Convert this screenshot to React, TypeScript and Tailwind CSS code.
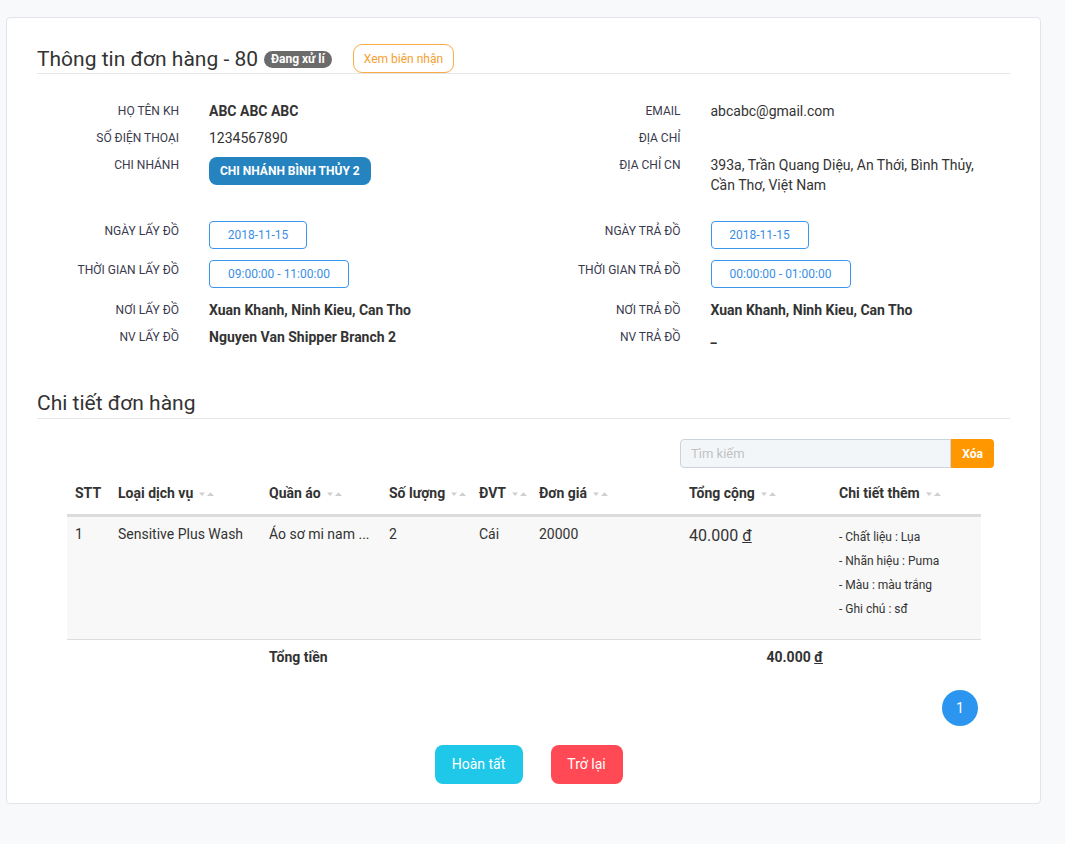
import React from "react";

const font = { fontFamily: "Roboto, 'Noto Sans', sans-serif" };

function SortIcon(): React.ReactElement {
  return (
    <svg width="17" height="6" viewBox="0 0 17 6" className="ml-[5px] inline-block align-middle">
      <path d="M1 1.5h6l-3 3.5z" fill="#cfcfcf" />
      <path d="M9 5h7l-3.5-3.8z" fill="#cfcfcf" />
    </svg>
  );
}

interface RowProps {
  label: string;
  labelW: string;
  children: React.ReactNode;
  className?: string;
}

function Row({ label, labelW, children, className = "" }: RowProps): React.ReactElement {
  return (
    <div className={`flex items-start ${className}`}>
      <div className={`${labelW} shrink-0 pr-[30px] text-right text-[12px] uppercase leading-[20px] text-[#3a3a4e]`}>
        {label}
      </div>
      <div className="text-[14px] leading-[20px] text-[#333]">{children}</div>
    </div>
  );
}

function DateBox({ w, children }: { w: string; children: React.ReactNode }): React.ReactElement {
  return (
    <div
      className={`${w} flex h-[28px] items-center justify-center rounded-[4px] border border-[#3b96ee] text-[12px] text-[#3b8fe6]`}
    >
      {children}
    </div>
  );
}

const headers = [
  { t: "STT", w: "w-[43px]", sort: false },
  { t: "Loại dịch vụ", w: "w-[151px]", sort: true },
  { t: "Quần áo", w: "w-[120px]", sort: true },
  { t: "Số lượng", w: "w-[90px]", sort: true },
  { t: "ĐVT", w: "w-[60px]", sort: true },
  { t: "Đơn giá", w: "w-[150px]", sort: true },
  { t: "Tổng cộng", w: "w-[150px]", sort: true },
  { t: "Chi tiết thêm", w: "w-[150px]", sort: true },
];

export default function App(): React.ReactElement {
  const L = "w-[172px]";
  const R = "w-[187px]";
  return (
    <div className="min-h-[844px] w-full bg-[#f8f9fb] pl-[6px] pr-[24px] pt-[17px]" style={font}>
      <div className="rounded-[4px] border border-[#e2e5e9] bg-white px-[30px] pb-[19px] pt-[26px]">
        {/* header */}
        <div className="flex items-center border-b border-[#e6e6e6]">
          <h1 className="text-[21px] font-normal leading-[28px] text-[#333]">Thông tin đơn hàng - 80</h1>
          <span className="ml-[6px] mt-[2px] rounded-full bg-[#6b6b6b] px-[7px] text-[12px] font-bold leading-[17px] text-white">
            Đang xử lí
          </span>
          <button
            type="button"
            className="ml-[21px] h-[29px] rounded-[9px] border border-[#f9ac45] px-[10px] text-[12px] text-[#f5a030]"
          >
            Xem biên nhận
          </button>
        </div>

        {/* info block 1 */}
        <div className="mt-[27px] grid grid-cols-2">
          <div className="flex flex-col gap-[7px]">
            <Row label="Họ tên KH" labelW={L}>
              <span className="font-bold">ABC ABC ABC</span>
            </Row>
            <Row label="Số điện thoại" labelW={L}>
              1234567890
            </Row>
            <Row label="Chi nhánh" labelW={L}>
              <span className="mt-[2px] inline-flex h-[28px] items-center rounded-[8px] bg-[#2584bf] px-[11px] text-[12px] font-bold uppercase text-white">
                Chi nhánh Bình Thủy 2
              </span>
            </Row>
          </div>
          <div className="flex flex-col gap-[7px]">
            <Row label="Email" labelW={R}>
              abcabc@gmail.com
            </Row>
            <Row label="Địa chỉ" labelW={R}>
              <span />
            </Row>
            <Row label="Địa chỉ CN" labelW={R}>
              <div className="w-[280px]">393a, Trần Quang Diệu, An Thới, Bình Thủy, Cần Thơ, Việt Nam</div>
            </Row>
          </div>
        </div>

        {/* info block 2 */}
        <div className="mt-[26px] grid grid-cols-2">
          <div className="flex flex-col">
            <Row label="Ngày lấy đồ" labelW={L}>
              <DateBox w="w-[98px]">2018-11-15</DateBox>
            </Row>
            <Row label="Thời gian lấy đồ" labelW={L} className="mt-[11px]">
              <DateBox w="w-[140px]">09:00:00 - 11:00:00</DateBox>
            </Row>
            <Row label="Nơi lấy đồ" labelW={L} className="mt-[12px]">
              <span className="font-bold">Xuan Khanh, Ninh Kieu, Can Tho</span>
            </Row>
            <Row label="NV lấy đồ" labelW={L} className="mt-[7px]">
              <span className="font-bold">Nguyen Van Shipper Branch 2</span>
            </Row>
          </div>
          <div className="flex flex-col">
            <Row label="Ngày trả đồ" labelW={R}>
              <DateBox w="w-[98px]">2018-11-15</DateBox>
            </Row>
            <Row label="Thời gian trả đồ" labelW={R} className="mt-[11px]">
              <DateBox w="w-[140px]">00:00:00 - 01:00:00</DateBox>
            </Row>
            <Row label="Nơi trả đồ" labelW={R} className="mt-[12px]">
              <span className="font-bold">Xuan Khanh, Ninh Kieu, Can Tho</span>
            </Row>
            <Row label="NV trả đồ" labelW={R} className="mt-[7px]">
              <span className="font-bold">_</span>
            </Row>
          </div>
        </div>

        {/* details */}
        <div className="mt-[42px] border-b border-[#e6e6e6] pb-[1px]">
          <h2 className="text-[21px] font-normal leading-[28px] text-[#333]">Chi tiết đơn hàng</h2>
        </div>

        <div className="mt-[20px] flex justify-end pr-[16px]">
          <div className="flex h-[29px]">
            <input
              placeholder="Tìm kiếm"
              className="w-[271px] rounded-l-[4px] border border-[#cdd3dc] bg-[#f3f6f9] px-[10px] text-[13px] text-[#333] outline-none placeholder:text-[#c2c2c2]"
            />
            <button
              type="button"
              className="w-[43px] rounded-r-[4px] bg-[#ff9800] text-[12px] font-bold text-white"
            >
              Xóa
            </button>
          </div>
        </div>

        <div className="px-[30px]">
          <table className="mt-[2px] w-[914px] table-fixed border-collapse text-[#333]">
            <thead>
              <tr className="border-b-[3px] border-[#dcdcdc]">
                {headers.map((h) => (
                  <th key={h.t} className={`${h.w} px-[8px] pb-[11px] pt-[13px] text-left text-[14px] font-bold leading-[20px]`}>
                    <span className="whitespace-nowrap">
                      {h.t}
                      {h.sort ? <SortIcon /> : null}
                    </span>
                  </th>
                ))}
              </tr>
            </thead>
            <tbody>
              <tr className="border-b border-[#dcdcdc] bg-[#f8f8f8] align-top text-[14px] leading-[18px]">
                <td className="px-[8px] pt-[8px]">1</td>
                <td className="px-[8px] pt-[8px]">Sensitive Plus Wash</td>
                <td className="px-[8px] pt-[8px] whitespace-nowrap">Áo sơ mi nam ...</td>
                <td className="px-[8px] pt-[8px]">2</td>
                <td className="px-[8px] pt-[8px]">Cái</td>
                <td className="px-[8px] pt-[8px]">20000</td>
                <td className="px-[8px] pt-[8px] text-[16px] leading-[22px]">
                  40.000 <span className="underline">đ</span>
                </td>
                <td className="px-[8px] pb-[18px] pt-[8px] text-[12px] leading-[24px]">
                  <div>- Chất liệu : Lụa</div>
                  <div>- Nhãn hiệu : Puma</div>
                  <div>- Màu : màu trắng</div>
                  <div>- Ghi chú : sđ</div>
                </td>
              </tr>
              <tr className="text-[14px] font-bold leading-[18px]">
                <td className="px-[8px] py-[8px]" />
                <td className="px-[8px] py-[8px]" />
                <td className="px-[8px] py-[8px]">Tổng tiền</td>
                <td className="px-[8px] py-[8px]" />
                <td className="px-[8px] py-[8px]" />
                <td className="px-[8px] py-[8px]" />
                <td className="px-[8px] py-[8px] text-right">
                  40.000 <span className="underline">đ</span>
                </td>
                <td className="px-[8px] py-[8px]" />
              </tr>
            </tbody>
          </table>

          <div className="mt-[16px] flex justify-end pr-[2px]">
            <span className="flex h-[36px] w-[36px] items-center justify-center rounded-full bg-[#2b95f0] text-[14px] text-white">
              1
            </span>
          </div>
        </div>

        <div className="mt-[19px] flex justify-center gap-[28px] pl-[10px]">
          <button type="button" className="h-[39px] w-[88px] rounded-[8px] bg-[#1fc7e8] text-[14px] text-white">
            Hoàn tất
          </button>
          <button type="button" className="h-[39px] w-[72px] rounded-[8px] bg-[#ff4a55] text-[14px] text-white">
            Trở lại
          </button>
        </div>
      </div>
    </div>
  );
}
